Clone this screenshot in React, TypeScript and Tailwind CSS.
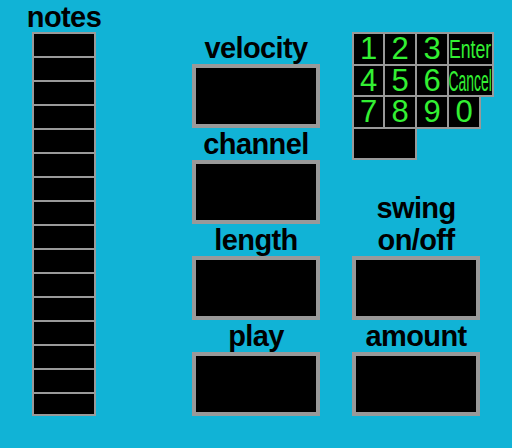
const DIGITS = ["1", "2", "3", "Enter", "4", "5", "6", "Cancel", "7", "8", "9", "0"];

function Label({ children }: { children: React.ReactNode }) {
  return (
    <div className="h-[32px] text-center text-[29px] tracking-[-0.6px] leading-[32px] font-bold text-black whitespace-nowrap">
      {children}
    </div>
  );
}

function Box() {
  return <div className="w-[128px] h-[64px] border-4 border-[#999] bg-black" />;
}

function Key({ label }: { label: string }) {
  let text = <span className="text-[31px] leading-[26px]">{label}</span>;
  if (label === "Enter") {
    text = <span className="text-[26px] leading-[24px] whitespace-nowrap scale-x-[0.68]">{label}</span>;
  } else if (label === "Cancel") {
    text = <span className="text-[29px] leading-[26px] whitespace-nowrap scale-x-[0.48]">{label}</span>;
  }
  return (
    <div
      className={
        "bg-black shadow-[0_0_0_2px_#999] flex items-center justify-center text-[#33f033] " +
        (label === "0" ? "w-[30px]" : "")
      }
    >
      {text}
    </div>
  );
}

export default function App() {
  return (
    <div className="w-[512px] h-[448px] bg-[#11b3d6] flex font-['Liberation_Sans',Arial,sans-serif] overflow-hidden">
      {/* notes column */}
      <div className="ml-[32px] w-[64px] flex flex-col">
        <div className="h-[32px] pt-[2px] text-center text-[29px] tracking-[-0.6px] leading-[30px] font-bold text-black whitespace-nowrap flex justify-center">
          notes
        </div>
        <div className="flex flex-col">
          {Array.from({ length: 16 }).map((_, i) => (
            <div
              key={i}
              className={
                i === 15
                  ? "h-[24px] border-2 border-[#999] bg-black"
                  : "h-[24px] border-x-2 border-t-2 border-[#999] bg-black"
              }
            />
          ))}
        </div>
      </div>

      {/* middle column */}
      <div className="ml-[96px] w-[128px] flex flex-col pt-[32px]">
        <Label>velocity</Label>
        <Box />
        <Label>channel</Label>
        <Box />
        <Label>length</Label>
        <Box />
        <Label>play</Label>
        <Box />
      </div>

      {/* right column */}
      <div className="ml-[32px] flex flex-col pt-[32px]">
        <div className="p-[2px]">
          <div className="grid grid-cols-[29px_30px_30px_43px] grid-rows-[30px_29px_30px_29px] gap-[2px]">
            {DIGITS.map((d) => (
              <Key key={d} label={d} />
            ))}
            <div className="col-span-2 bg-black shadow-[0_0_0_2px_#999]" />
          </div>
        </div>
        <div className="h-[32px]" />
        <div className="w-[128px] h-[64px] text-center text-[29px] tracking-[-0.6px] leading-[32px] font-bold text-black">
          <div>swing</div>
          <div>on/off</div>
        </div>
        <Box />
        <div className="w-[128px]">
          <Label>amount</Label>
        </div>
        <Box />
      </div>
    </div>
  );
}
